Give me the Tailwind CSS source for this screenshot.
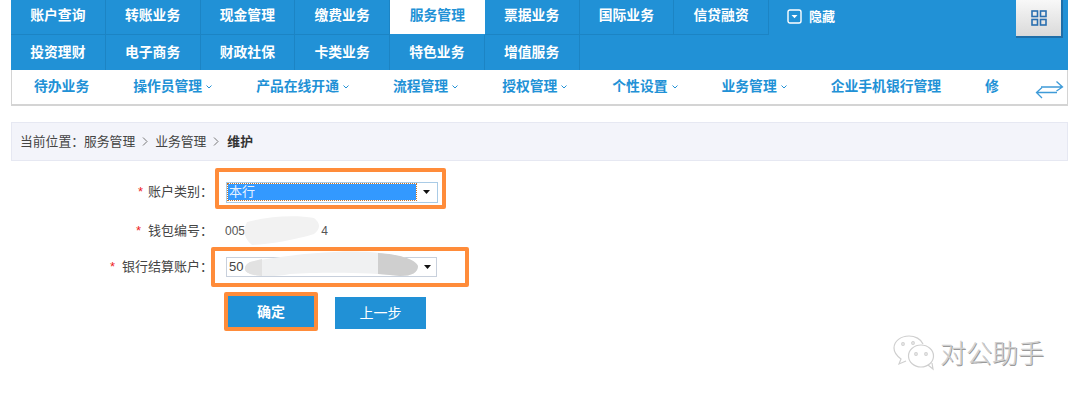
<!DOCTYPE html>
<html><head><meta charset="utf-8"><script src="https://cdn.jsdelivr.net/npm/@tailwindcss/browser@4"></script></head>
<body class="bg-white">
<div class="relative w-[1080px] h-[401px] overflow-hidden bg-white font-['Liberation_Sans','Noto_Sans_CJK_SC',sans-serif] text-[13px] text-[#333]">
  <div class="pl-[11px] pr-[12px]">
    <nav class="bg-[#2191d6] h-[70px] text-white font-bold text-[13.8px]">
      <div class="flex h-[35px]">
        <div class="w-[94.75px] pb-[2px] flex items-center justify-center border-r border-b border-[#1c84c4]">账户查询</div>
        <div class="w-[94.75px] pb-[2px] flex items-center justify-center border-r border-b border-[#1c84c4]">转账业务</div>
        <div class="w-[94.75px] pb-[2px] flex items-center justify-center border-r border-b border-[#1c84c4]">现金管理</div>
        <div class="w-[94.75px] pb-[2px] flex items-center justify-center border-r border-b border-[#1c84c4]">缴费业务</div>
        <div class="w-[94.75px] h-[34px] pb-[1px] flex items-center justify-center bg-white text-[#2191d6]">服务管理</div>
        <div class="w-[94.75px] pb-[2px] flex items-center justify-center border-r border-b border-[#1c84c4]">票据业务</div>
        <div class="w-[94.75px] pb-[2px] flex items-center justify-center border-r border-b border-[#1c84c4]">国际业务</div>
        <div class="w-[94.75px] pb-[2px] flex items-center justify-center border-r border-b border-[#1c84c4]">信贷融资</div>
        <div class="flex items-center pb-[2px] pl-[18px] gap-[7px]">
          <svg width="15" height="15" viewBox="0 0 15 15" fill="none"><rect x="1" y="1" width="13" height="13" rx="2" stroke="#fff" stroke-width="1.4"/><path d="M4.500 6h6l-3 3.200z" fill="#fff"/></svg>
          <span class="text-[13px]">隐藏</span>
        </div>
      </div>
      <div class="flex h-[35px]">
        <div class="w-[94.75px] pt-[1px] flex items-center justify-center border-r border-[#1c84c4]">投资理财</div>
        <div class="w-[94.75px] pt-[1px] flex items-center justify-center border-r border-[#1c84c4]">电子商务</div>
        <div class="w-[94.75px] pt-[1px] flex items-center justify-center border-r border-[#1c84c4]">财政社保</div>
        <div class="w-[94.75px] pt-[1px] flex items-center justify-center border-r border-[#1c84c4]">卡类业务</div>
        <div class="w-[94.75px] pt-[1px] flex items-center justify-center border-r border-[#1c84c4]">特色业务</div>
        <div class="w-[94.75px] pt-[1px] flex items-center justify-center border-r border-[#1c84c4]">增值服务</div>
      </div>
    </nav>
    <div class="relative h-[36px] flex items-center border border-t-0 border-b-2 border-[#d4d4d4] text-[#2191d6] font-bold text-[13.8px]">
      <span class="ml-[22px]">待办业务</span>
      <span class="ml-[44px]">操作员管理</span><svg class="ml-[4px]" width="6" height="4" viewBox="0 0 6 4" fill="none"><path d="M.5.5 3 3 5.500.5" stroke="#2191d6"/></svg>
      <span class="ml-[44px]">产品在线开通</span><svg class="ml-[4px]" width="6" height="4" viewBox="0 0 6 4" fill="none"><path d="M.5.5 3 3 5.500.5" stroke="#2191d6"/></svg>
      <span class="ml-[44px]">流程管理</span><svg class="ml-[4px]" width="6" height="4" viewBox="0 0 6 4" fill="none"><path d="M.5.5 3 3 5.500.5" stroke="#2191d6"/></svg>
      <span class="ml-[44px]">授权管理</span><svg class="ml-[4px]" width="6" height="4" viewBox="0 0 6 4" fill="none"><path d="M.5.5 3 3 5.500.5" stroke="#2191d6"/></svg>
      <span class="ml-[45px]">个性设置</span><svg class="ml-[4px]" width="6" height="4" viewBox="0 0 6 4" fill="none"><path d="M.5.5 3 3 5.500.5" stroke="#2191d6"/></svg>
      <span class="ml-[44px]">业务管理</span><svg class="ml-[4px]" width="6" height="4" viewBox="0 0 6 4" fill="none"><path d="M.5.5 3 3 5.500.5" stroke="#2191d6"/></svg>
      <span class="ml-[44px]">企业手机银行管理</span>
      <span class="ml-[44px]">修</span>
      <svg class="absolute right-[3px] top-[11px]" width="29" height="18" viewBox="0 0 29 18" fill="none" stroke="#3f9bd8" stroke-width="1.300"><path d="M6 6H27.500M21.500 .5 27.500 6 21.500 10"/><path d="M1.500 11.500H22M7 6.500 1.500 11.500 7 17"/></svg>
    </div>
    <div class="mt-[16px] h-[39px] flex items-center bg-[#f3f4fa] border border-[#e6e8f2] pl-[8px] text-[12.8px] text-[#444]">
      <span>当前位置：服务管理</span>
      <svg class="mx-[7px]" width="6" height="9" viewBox="0 0 6 9" fill="none"><path d="M1 .5 5 4.500 1 8.500" stroke="#777"/></svg>
      <span>业务管理</span>
      <svg class="mx-[7px]" width="6" height="9" viewBox="0 0 6 9" fill="none"><path d="M1 .5 5 4.500 1 8.500" stroke="#777"/></svg>
      <b class="ml-[1px] text-[#333]">维护</b>
    </div>
    <form class="-ml-[11px] mt-[7px] text-[13px] text-[#444]">
      <div class="flex items-center h-[41px]">
        <label class="w-[213px] pt-[7px] text-right"><span class="text-[#e22] mr-[5px]">*</span>账户类别：</label>
        <div class="ml-[2px] border-[4px] border-[#ff8c3a] rounded-[2px] w-[231px] h-[41px] flex items-center pl-[7px] pt-[7px]">
          <div class="w-[212px] h-[21px] border border-[#a9cbe6] flex items-center"><span class="ml-[1px] flex-1 h-[16px] bg-[#3399ff] text-[#e8f2ff] leading-[16px] pl-[1px] outline-1 outline-dotted outline-[#c9762a]">本行</span><svg class="mx-[7px]" width="7" height="4"><path d="M0 0h7L3.500 4z" fill="#111"/></svg></div>
        </div>
      </div>
      <div class="flex items-center h-[28px] mt-[8px]">
        <label class="w-[213px] text-right"><span class="text-[#e22] mr-[7px]">*</span>钱包编号：</label>
        <span class="ml-[12px] text-[12px] w-[103px] flex justify-between text-[#555]"><span>005</span><span>4</span></span>
      </div>
      <div class="flex items-center h-[40px] mt-[2px]">
        <label class="w-[213px] text-right"><span class="text-[#e22] mr-[7px]">*</span>银行结算账户：</label>
        <div class="-ml-[2px] border-[4px] border-[#ff8c3a] rounded-[2px] w-[258px] h-[40px] flex items-center pl-[11px]">
          <div class="w-[211px] h-[20px] border border-[#c8d0dc] flex items-center justify-between pl-[2px]"><span class="text-[13px]">50</span><svg class="mx-[5px]" width="7" height="4"><path d="M0 0h7L3.500 4z" fill="#111"/></svg></div>
        </div>
      </div>
      <div class="flex items-start mt-[5px] ml-[224px] text-[14px] text-white">
        <div class="w-[94px] h-[39px] pt-[1px] bg-[#2191d6] border-[4px] border-[#ff8c3a] rounded-[2px] flex items-center justify-center font-bold">确定</div>
        <div class="ml-[17px] mt-[5px] w-[91px] h-[32px] bg-[#2191d6] flex items-center justify-center">上一步</div>
      </div>
    </form>
  </div>
  <!-- redaction smears over the account numbers -->
  <svg class="absolute left-0 top-0 blur-[0.6px]" width="1080" height="401" viewBox="0 0 1080 401">
    <path d="M247 222C270 216 296 215 314 218Q324 226 314 234C295 240 270 244 252 245Q240 235 247 222Z" fill="#f2f2f2"/>
    <path d="M250 262C290 254 340 250 370 252C395 254 415 258 418 266Q418 276 400 276C370 272 320 272 290 274C270 278 248 276 245 270Q244 265 250 262Z" fill="#f0f1f2"/>
    <path d="M378 253C395 254 415 258 418 266Q418 276 400 276 390 275 378 274Z" fill="#cfcfcf"/>
    <path d="M245 270Q244 265 250 262L262 259V276C255 276 247 274 245 270Z" fill="#e2e2e2"/>
  </svg>
  <!-- watermark -->
  <div class="absolute left-[893px] top-[335px] flex items-center gap-[5px]">
    <svg width="42" height="37" viewBox="0 0 42 37" fill="none" stroke="#cfcfcf" stroke-width="1.200">
      <path d="M13 26 6 29l2-5C4 21 1 17 1 13 1 6 8 1 16 1c6 0 12 3 14 8"/>
      <ellipse cx="28" cy="21" rx="12.500" ry="11" fill="#fff"/><path d="M35 30l5 4-1-6"/>
      <circle cx="23" cy="19" r="1.300"/><circle cx="33" cy="19" r="1.300"/><circle cx="10" cy="9" r="1.300"/><circle cx="20" cy="8" r="1.300"/>
    </svg>
    <span class="text-[26px] leading-none font-light text-[#d0d0d0] [text-shadow:1px_1px_0_#9a9a9a]">对公助手</span>
  </div>
  <!-- grid button -->
  <div class="absolute left-[1016px] top-0 w-[45px] h-[36px] bg-gradient-to-b from-[#f8f8f8] to-[#dadada] shadow-[1px_1px_0_1px_#1f6ea8] flex items-center justify-center">
    <svg width="16" height="16" viewBox="0 0 16 16" fill="none" stroke="#2a6fb0" stroke-width="1.600"><rect x="1" y="1" width="5.500" height="5.500"/><rect x="9.500" y="1" width="5.500" height="5.500"/><rect x="1" y="9.500" width="5.500" height="5.500"/><rect x="9.500" y="9.500" width="5.500" height="5.500"/></svg>
  </div>
</div>
</body></html>
